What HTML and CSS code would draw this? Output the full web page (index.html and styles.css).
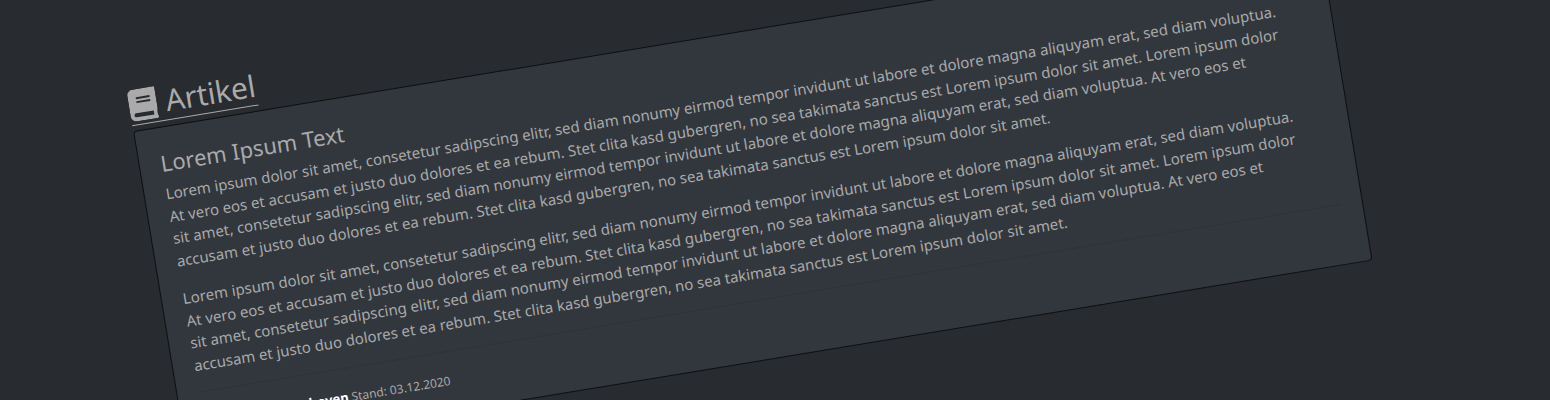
FILE: index.html
```html
<!DOCTYPE html>
<html lang="de">
<head>
<meta charset="utf-8">
<title>Artikel</title>
<link rel="stylesheet" href="styles.css">
</head>
<body>
<main class="page">
  <h1 class="page-title">
    <svg class="book" viewBox="0 0 448 512" aria-hidden="true"><path fill="currentColor" d="M448 360V24c0-13.300-10.700-24-24-24H96C43 0 0 43 0 96v320c0 53 43 96 96 96h328c13.300 0 24-10.700 24-24v-16c0-7.500-3.500-14.300-8.900-18.700-4.200-15.400-4.200-59.300 0-74.700 5.400-4.300 8.900-11.100 8.900-18.600zM128 134c0-3.300 2.700-6 6-6h212c3.300 0 6 2.700 6 6v20c0 3.300-2.700 6-6 6H134c-3.300 0-6-2.700-6-6v-20zm0 64c0-3.300 2.700-6 6-6h212c3.300 0 6 2.700 6 6v20c0 3.300-2.700 6-6 6H134c-3.300 0-6-2.700-6-6v-20zm253.400 250H96c-17.700 0-32-14.300-32-32 0-17.600 14.400-32 32-32h285.400c-1.900 17.100-1.900 46.900 0 64z"/></svg>
    <span>Artikel</span>
  </h1>
  <article class="card">
    <h2 class="card-title">Lorem Ipsum Text</h2>
    <p class="text">Lorem ipsum dolor sit amet, consetetur sadipscing elitr, sed diam nonumy eirmod tempor invidunt ut labore et dolore magna aliquyam erat, sed diam voluptua.<br>At vero eos et accusam et justo duo dolores et ea rebum. Stet clita kasd gubergren, no sea takimata sanctus est Lorem ipsum dolor sit amet. Lorem ipsum dolor<br>sit amet, consetetur sadipscing elitr, sed diam nonumy eirmod tempor invidunt ut labore et dolore magna aliquyam erat, sed diam voluptua. At vero eos et<br>accusam et justo duo dolores et ea rebum. Stet clita kasd gubergren, no sea takimata sanctus est Lorem ipsum dolor sit amet.</p>
    <p class="text">Lorem ipsum dolor sit amet, consetetur sadipscing elitr, sed diam nonumy eirmod tempor invidunt ut labore et dolore magna aliquyam erat, sed diam voluptua.<br>At vero eos et accusam et justo duo dolores et ea rebum. Stet clita kasd gubergren, no sea takimata sanctus est Lorem ipsum dolor sit amet. Lorem ipsum dolor<br>sit amet, consetetur sadipscing elitr, sed diam nonumy eirmod tempor invidunt ut labore et dolore magna aliquyam erat, sed diam voluptua. At vero eos et<br>accusam et justo duo dolores et ea rebum. Stet clita kasd gubergren, no sea takimata sanctus est Lorem ipsum dolor sit amet.</p>
    <hr class="rule">
    <footer class="meta"><strong class="author">Ludwig van Beethoven</strong> <span>Stand: 03.12.2020</span></footer>
  </article>
</main>
</body>
</html>
```
FILE: styles.css
```css
html {
  overflow: hidden;
  background: #282b2f;
}

body {
  margin: 0;
  color: #aaa;
  font-family: "Noto Sans", "Open Sans", sans-serif;
  font-size: 15px;
  line-height: 1.5;
}

.page {
  box-sizing: border-box;
  max-width: 1312px;
  padding: 106px 0 0 110px;
  transform: rotate(-9.35deg);
  transform-origin: 0 0;
}

.page-title {
  display: flex;
  align-items: center;
  gap: 9px;
  width: max-content;
  margin: 0 0 5px;
  border-bottom: 1px solid #aaa;
  font-size: 30px;
  font-weight: 400;
  line-height: 39px;
}

.book {
  width: 28px;
  height: 32px;
}

.card {
  box-sizing: border-box;
  padding: 21px;
  border: 1px solid #0e0f11;
  border-radius: 4px;
  background: #32373e;
}

.card-title {
  margin: 0 0 6px;
  font-size: 22px;
  font-weight: 400;
  line-height: 28px;
}

.text {
  margin: 0 0 16px;
  white-space: nowrap;
}

.rule {
  height: 1px;
  margin: 0 0 19px;
  border: 0;
  background: #2e3238;
}

.meta {
  font-size: 12px;
  line-height: 18px;
}

.author {
  color: #fff;
  font-size: 13px;
}
```
